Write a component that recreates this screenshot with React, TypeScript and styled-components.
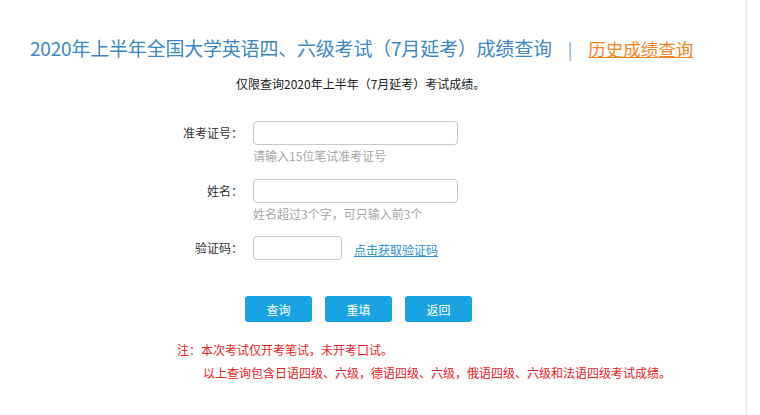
import styled, { createGlobalStyle } from 'styled-components';

const GlobalStyle = createGlobalStyle`
    html, body {
        margin: 0;
        padding: 0;
        background: #fff;
    }
    body {
        font-family: "Microsoft YaHei", "Noto Sans CJK SC", "Noto Sans", sans-serif;
        color: #333;
    }
`;

const Page = styled.div`
    width: 747px;
    height: 415px;
    border-right: 2px solid #ececec;
    box-sizing: border-box;
    overflow: hidden;
`;

const TitleBar = styled.div`
    display: flex;
    align-items: baseline;
    padding: 34px 0 0 30px;
    height: 34px;
`;

const Title = styled.h1`
    margin: 0;
    font-size: 19px;
    font-weight: normal;
    color: #3d87c6;
    letter-spacing: -0.2px;
    white-space: nowrap;
`;

const Divider = styled.span`
    margin: 0 16px 0 16px;
    font-size: 17px;
    color: #7aa6cf;
`;

const HistoryLink = styled.a`
    font-size: 17.5px;
    color: #f6861f;
    text-decoration: underline;
    cursor: pointer;
`;

const Notice = styled.p`
    margin: 7px 0 0 236px;
    font-size: 12px;
    color: #222;
`;

const Form = styled.div`
    display: grid;
    grid-template-columns: 243px auto;
    column-gap: 10px;
    margin-top: 29px;
`;

const Label = styled.label`
    text-align: right;
    font-size: 12px;
    color: #333;
    line-height: 24px;
`;

const Field = styled.div<{ $gap?: number }>`
    display: flex;
    flex-direction: column;
    margin-bottom: ${p => p.$gap ?? 0}px;
`;

const Input = styled.input<{ $w: number }>`
    width: ${p => p.$w}px;
    height: 24px;
    box-sizing: border-box;
    border: 1px solid #c9c9c9;
    border-radius: 4px;
    outline: none;
    padding: 0 6px;
`;

const Hint = styled.span`
    font-size: 12px;
    color: #a6a6a6;
    margin-top: 3px;
    line-height: 16px;
`;

const InlineRow = styled.div`
    display: flex;
    align-items: center;
    gap: 12px;
`;

const CaptchaLink = styled.a`
    font-size: 12px;
    color: #2a90d8;
    text-decoration: underline;
    cursor: pointer;
    margin-top: 2px;
`;

const Buttons = styled.div`
    display: flex;
    gap: 13px;
    margin: 36px 0 0 245px;
`;

const Button = styled.button`
    width: 67px;
    height: 26px;
    border: none;
    border-radius: 3px;
    background: #19a3e3;
    color: #fff;
    font-family: inherit;
    font-size: 12px;
    cursor: pointer;
`;

const Notes = styled.div`
    margin: 16px 0 0 177px;
    font-size: 12px;
    color: #ec1c24;
    line-height: 23px;
`;

const NoteLine = styled.div<{ $indent?: number }>`
    padding-left: ${p => p.$indent ?? 0}px;
`;

export default function App() {
    return (
        <>
            <GlobalStyle />
            <Page>
                <TitleBar>
                    <Title>2020年上半年全国大学英语四、六级考试（7月延考）成绩查询</Title>
                    <Divider>|</Divider>
                    <HistoryLink>历史成绩查询</HistoryLink>
                </TitleBar>
                <Notice>仅限查询2020年上半年（7月延考）考试成绩。</Notice>
                <Form>
                    <Label>准考证号：</Label>
                    <Field $gap={15}>
                        <Input $w={205} />
                        <Hint>请输入15位笔试准考证号</Hint>
                    </Field>
                    <Label>姓名：</Label>
                    <Field $gap={14}>
                        <Input $w={205} />
                        <Hint>姓名超过3个字，可只输入前3个</Hint>
                    </Field>
                    <Label>验证码：</Label>
                    <Field>
                        <InlineRow>
                            <Input $w={89} />
                            <CaptchaLink>点击获取验证码</CaptchaLink>
                        </InlineRow>
                    </Field>
                </Form>
                <Buttons>
                    <Button>查询</Button>
                    <Button>重填</Button>
                    <Button>返回</Button>
                </Buttons>
                <Notes>
                    <NoteLine>注：本次考试仅开考笔试，未开考口试。</NoteLine>
                    <NoteLine $indent={26}>以上查询包含日语四级、六级，德语四级、六级，俄语四级、六级和法语四级考试成绩。</NoteLine>
                </Notes>
            </Page>
        </>
    );
}
